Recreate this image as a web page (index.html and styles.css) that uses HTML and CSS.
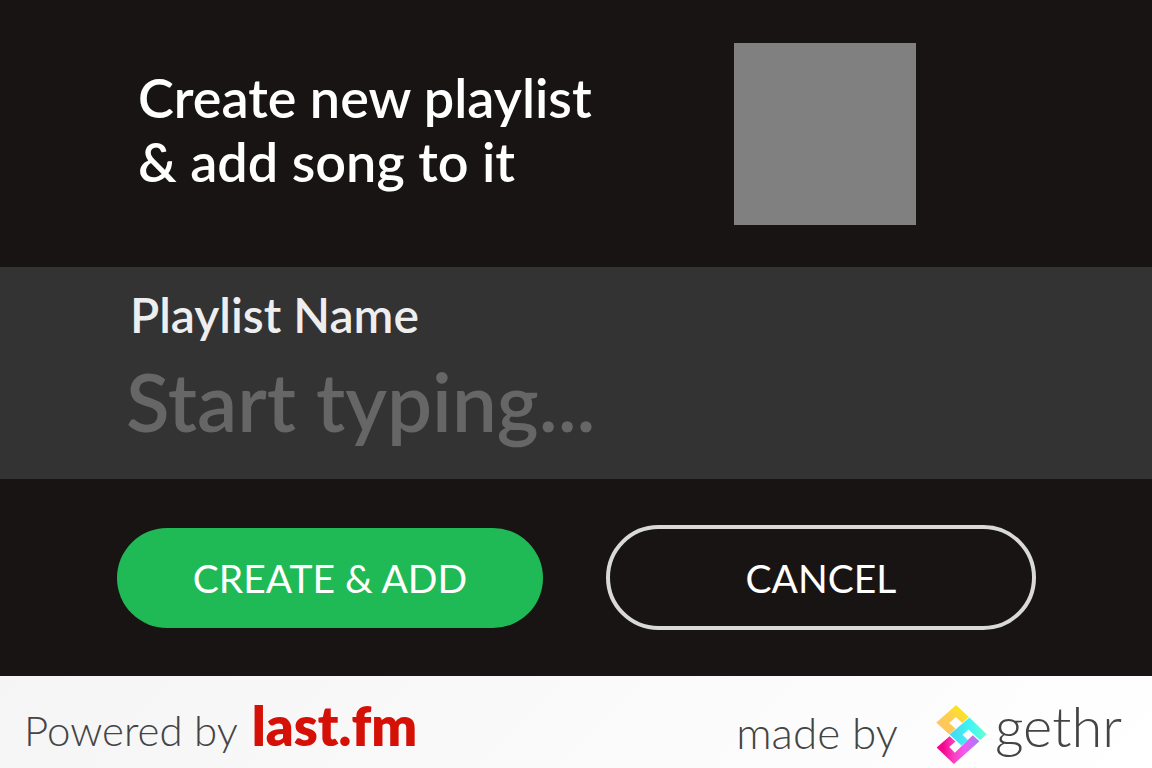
FILE: index.html
```
<!DOCTYPE html>
<html lang="en">
<head>
    <meta charset="UTF-8">
    <meta name="viewport" content="width=device-width, initial-scale=1.0">
    <title>Create new playlist</title>
    <link rel="stylesheet" href="styles.css">
</head>
<body>
    <form class="playlist-form">
        <header class="header">
            <h1>Create new playlist<br>&amp; add song to it</h1>
            <div class="cover"></div>
        </header>

        <div class="name-field">
            <label for="playlist-name">Playlist Name</label>
            <input type="text" id="playlist-name" placeholder="Start typing..." autocomplete="off">
        </div>

        <div class="buttons">
            <button type="submit" class="btn btn-create">CREATE &amp; ADD</button>
            <button type="button" class="btn btn-cancel">CANCEL</button>
        </div>
    </form>

    <footer class="footer">
        <div class="powered">
            <span>Powered by</span>
            <a href="#" class="lastfm">last.fm</a>
        </div>
        <div class="made">
            <span class="made-by">made by</span>
            <a href="#" class="gethr">
                <svg class="gethr-logo" viewBox="0 0 152 178" aria-hidden="true">
                    <defs>
                        <linearGradient id="yellow" x1="0" y1="1" x2="1" y2="0">
                            <stop offset="0.3" stop-color="#ffc65c"/>
                            <stop offset="0.6" stop-color="#ffd347"/>
                            <stop offset="0.9" stop-color="#f8f000"/>
                        </linearGradient>
                        <linearGradient id="cyan" x1="0" y1="0.5" x2="1" y2="0.5">
                            <stop offset="0.1" stop-color="#47d9f5"/>
                            <stop offset="0.55" stop-color="#3ff5f2"/>
                            <stop offset="1" stop-color="#6bffd2"/>
                        </linearGradient>
                        <linearGradient id="pink" x1="0" y1="0.5" x2="1" y2="0.5">
                            <stop offset="0.15" stop-color="#f5068f"/>
                            <stop offset="0.4" stop-color="#fb3fc0"/>
                            <stop offset="0.65" stop-color="#f05af0"/>
                            <stop offset="0.95" stop-color="#a97af8"/>
                        </linearGradient>
                    </defs>
                    <path fill="url(#yellow)" d="M60 0 98 36 78 54 59 36 39 54 58 72 39 89 0 53z"/>
                    <path fill="url(#cyan)" d="M100 38 152 88 132 106 97 74 79 90 96 106 76 122 40 89z"/>
                    <path fill="url(#pink)" d="M40 94 58 110 39 127 56 144 110 91 130 109 53 178 1 128z"/>
                </svg>
                <span>gethr</span>
            </a>
        </div>
    </footer>
</body>
</html>
```
FILE: styles.css
```
* {
    box-sizing: border-box;
}
body {
    display: flex;
    flex-direction: column;
    min-height: 100vh;
    margin: 0;
    font-family: Lato, "Liberation Sans", sans-serif;
    background: #191414;
    color: #fff;
}
.playlist-form {
    flex: 1;
}
.header {
    display: flex;
    justify-content: space-between;
    align-items: center;
    padding: 43px 236px 42px 138px;
}
h1 {
    margin: 0;
    padding-bottom: 8px;
    font-size: 54px;
    font-weight: 600;
    line-height: 64px;
}
.cover {
    width: 182px;
    height: 182px;
    background: #808080;
}
.name-field {
    display: flex;
    flex-direction: column;
    padding: 18px 126px 22px;
    background: #333;
}
.name-field label {
    padding-left: 4px;
    font-size: 48px;
    font-weight: 600;
    line-height: 60px;
    color: #eee;
}
.name-field input {
    width: 100%;
    height: 112px;
    padding: 0;
    border: none;
    outline: none;
    background: transparent;
    font-family: inherit;
    font-size: 80px;
    font-weight: 600;
    color: #fff;
}
.name-field input::placeholder {
    color: #666;
    opacity: 1;
}
.buttons {
    display: flex;
    align-items: center;
    gap: 63px;
    padding: 46px 116px 45px 117px;
}
.btn {
    width: 100%;
    height: 100px;
    padding: 0;
    border: none;
    border-radius: 53px;
    font-family: inherit;
    font-size: 39px;
    color: #fff;
    cursor: pointer;
}
.btn-create {
    background: #1fba55;
}
.btn-cancel {
    height: 105px;
    border: 4px solid #d9d9d9;
    background: transparent;
}
.footer {
    display: flex;
    justify-content: space-between;
    align-items: center;
    height: 92px;
    padding: 8px 30px 0 24px;
    background: linear-gradient(135deg, #f5f5f5, #fff);
    color: #444;
    font-size: 42px;
    font-weight: 300;
}
.footer a {
    color: inherit;
    text-decoration: none;
}
.powered {
    display: flex;
    align-items: baseline;
    gap: 14px;
}
.footer .lastfm {
    font-size: 54px;
    font-weight: 800;
    line-height: 60px;
    color: #d51007;
}
.made,
.gethr {
    display: flex;
    align-items: center;
}
.made {
    gap: 38px;
}
.made-by {
    padding-top: 12px;
    font-size: 44px;
}
.gethr {
    gap: 8px;
    font-size: 56px;
    line-height: 60px;
}
.gethr-logo {
    width: 51px;
    height: 59px;
    margin-top: 16px;
}
```
